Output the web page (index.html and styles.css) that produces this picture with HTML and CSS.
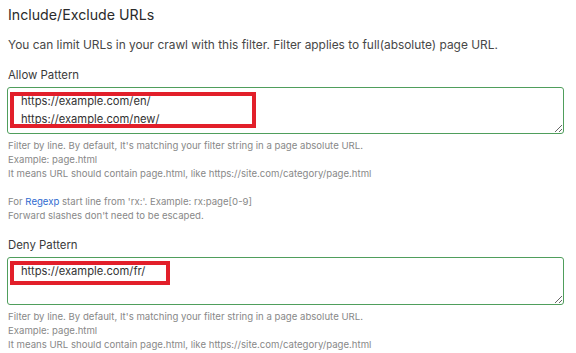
FILE: index.html
```
<!DOCTYPE html>
<html>
<head>
<meta charset="utf-8">
<link rel="stylesheet" href="styles.css">
</head>
<body>
<div class="page">
  <h2 class="title">Include/Exclude URLs</h2>
  <p class="desc">You can limit URLs in your crawl with this filter. Filter applies to full(absolute) page URL.</p>

  <div class="field">
    <label class="label">Allow Pattern</label>
    <div class="area-wrap">
      <textarea class="area" readonly>https://example.com/en/
https://example.com/new/</textarea>
      <div class="mark mark-allow"></div>
    </div>
    <div class="help">
      <div>Filter by line. By default, It's matching your filter string in a page absolute URL.</div>
      <div>Example: page.html</div>
      <div>It means URL should contain page.html, like https://site.com/category/page.html</div>
      <div class="blank"></div>
      <div>For <a class="link" href="#">Regexp</a> start line from 'rx:'. Example: rx:page[0-9]</div>
      <div>Forward slashes don't need to be escaped.</div>
    </div>
  </div>

  <div class="field field-deny">
    <label class="label">Deny Pattern</label>
    <div class="area-wrap">
      <textarea class="area area-deny" readonly>https://example.com/fr/</textarea>
      <div class="mark mark-deny"></div>
    </div>
    <div class="help">
      <div>Filter by line. By default, It's matching your filter string in a page absolute URL.</div>
      <div>Example: page.html</div>
      <div>It means URL should contain page.html, like https://site.com/category/page.html</div>
    </div>
  </div>
</div>
</body>
</html>
```
FILE: styles.css
```
html, body {
  margin: 0;
  padding: 0;
  background: #ffffff;
}
.page {
  padding: 5px 0 0 8px;
  font-family: Inter, "Noto Sans", sans-serif;
  color: #333;
}
.title {
  margin: 0;
  font-size: 14.2px;
  line-height: 20px;
  font-weight: 400;
  color: #2b2b2b;
}
.desc {
  margin: 12px 0 0 0;
  font-size: 11.9px;
  line-height: 16px;
  color: #474747;
}
.field {
  margin-top: 14px;
}
.field-deny {
  margin-top: 14px;
}
.label {
  display: block;
  font-size: 11.4px;
  line-height: 16px;
  color: #3a3a3a;
}
.area-wrap {
  position: relative;
  margin: 4px 0 0 -1px;
  width: 557px;
}
.area {
  display: block;
  box-sizing: border-box;
  width: 557px;
  height: 47px;
  margin: 0;
  padding: 4px 13px 0 13px;
  border: 1px solid #4f9e5c;
  border-radius: 3px;
  font-family: Inter, "Noto Sans", sans-serif;
  font-size: 11.2px;
  line-height: 18px;
  color: #333;
  background: #fff;
  overflow: hidden;
  outline: none;
}
.area-deny {
  height: 48px;
}
.mark {
  position: absolute;
  border: 4px solid #e21f2a;
  box-sizing: border-box;
}
.mark-allow {
  left: 3px;
  top: 5px;
  width: 246px;
  height: 36px;
}
.mark-deny {
  left: 3px;
  top: 4px;
  width: 160px;
  height: 24px;
}
.help {
  margin-top: 5px;
  font-size: 9.6px;
  line-height: 14px;
  color: #888;
}
.blank {
  height: 14px;
}
.link {
  color: #2f6bd0;
  text-decoration: none;
}
```
